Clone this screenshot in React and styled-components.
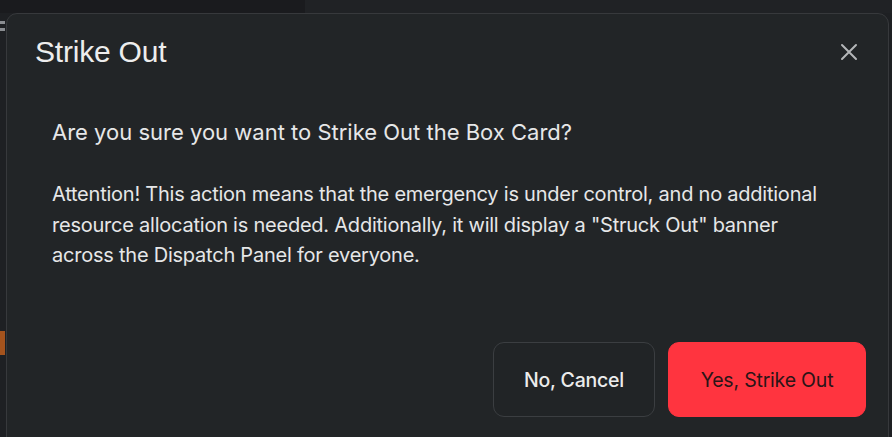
import React from "react";
import styled, { createGlobalStyle } from "styled-components";

const Global = createGlobalStyle`
  html, body { margin: 0; padding: 0; background: #1d1f22; }
  body { width: 892px; height: 437px; overflow: hidden; font-family: Inter, "Noto Sans", sans-serif; }
`;

const Page = styled.div`
  position: relative;
  width: 892px;
  height: 437px;
  overflow: hidden;
  background: #1e2023;
  display: grid;
  grid-template-columns: 305px 1fr;
  grid-template-rows: 13px 1fr;
`;

const TopBarDark = styled.div`
  background: #1a1b1e;
`;

const TopBarLight = styled.div`
  background: #202225;
`;

const SideEdge = styled.div`
  grid-column: 1 / -1;
  display: flex;
  flex-direction: column;
  padding-top: 8px;
`;

const MenuGlyph = styled.div`
  width: 5px;
  height: 10px;
  border-top: 3px solid #8a8d91;
  border-bottom: 3px solid #8a8d91;
  box-sizing: border-box;
`;

const OrangeTag = styled.div`
  margin-top: 300px;
  width: 5px;
  height: 24px;
  background: #a4531d;
`;

const Overlay = styled.div`
  position: absolute;
  inset: 0;
  padding: 13px 3px 0 6px;
`;

const Modal = styled.div`
  box-sizing: border-box;
  height: 440px;
  background: #222527;
  border: 1px solid #37393c;
  border-radius: 11px;
  display: flex;
  flex-direction: column;
`;

const Header = styled.div`
  display: flex;
  align-items: center;
  justify-content: space-between;
  padding: 20px 28px 0 28px;
  height: 36px;
`;

const Title = styled.h2`
  margin: 0;
  font-family: "Liberation Sans", Arial, sans-serif;
  font-weight: 400;
  font-size: 30px;
  color: #ededed;
  letter-spacing: -0.2px;
`;

const CloseBtn = styled.button`
  background: none;
  border: none;
  padding: 0;
  width: 22px;
  height: 22px;
  display: flex;
  align-items: center;
  justify-content: center;
  color: #b4b6b8;
  cursor: pointer;
`;

const Body = styled.div`
  padding: 47px 60px 0 45px;
  color: #e6e7e8;
  flex: 1;
`;

const Question = styled.p`
  margin: 0;
  font-size: 22px;
  line-height: 30px;
  font-weight: 400;
  letter-spacing: 0;
`;

const Text = styled.p`
  margin: 32px 0 0;
  font-size: 20px;
  line-height: 30.5px;
  font-weight: 400;
  letter-spacing: -0.23px;
`;

const Footer = styled.div`
  display: flex;
  justify-content: flex-end;
  gap: 13px;
  padding: 0 22px 35px 0;
`;

const Button = styled.button`
  box-sizing: border-box;
  height: 75px;
  width: ${(p) => p.$w}px;
  border-radius: 11px;
  font-family: Inter, "Noto Sans", sans-serif;
  font-size: 19.5px;
  letter-spacing: -0.2px;
  cursor: pointer;
  border: 1px solid ${(p) => (p.$danger ? "#ff343f" : "#3b3e41")};
  background: ${(p) => (p.$danger ? "#ff343f" : "#212426")};
  color: ${(p) => (p.$danger ? "#2a1517" : "#ececec")};
  font-weight: ${(p) => (p.$danger ? 400 : 500)};
`;

export default function App() {
  return (
    <>
      <Global />
      <Page>
        <TopBarDark />
        <TopBarLight />
        <SideEdge>
          <MenuGlyph />
          <OrangeTag />
        </SideEdge>
        <Overlay>
          <Modal role="dialog">
            <Header>
              <Title>Strike Out</Title>
              <CloseBtn aria-label="Close">
                <svg width="18" height="18" viewBox="0 0 18 18" fill="none" stroke="currentColor" strokeWidth="2" strokeLinecap="round">
                  <path d="M2 2L16 16M16 2L2 16" />
                </svg>
              </CloseBtn>
            </Header>
            <Body>
              <Question>Are you sure you want to Strike Out the Box Card?</Question>
              <Text>
                Attention! This action means that the emergency is under control, and no additional
                resource allocation is needed. Additionally, it will display a "Struck Out" banner
                across the Dispatch Panel for everyone.
              </Text>
            </Body>
            <Footer>
              <Button $w={162}>No, Cancel</Button>
              <Button $w={198} $danger>Yes, Strike Out</Button>
            </Footer>
          </Modal>
        </Overlay>
      </Page>
    </>
  );
}
